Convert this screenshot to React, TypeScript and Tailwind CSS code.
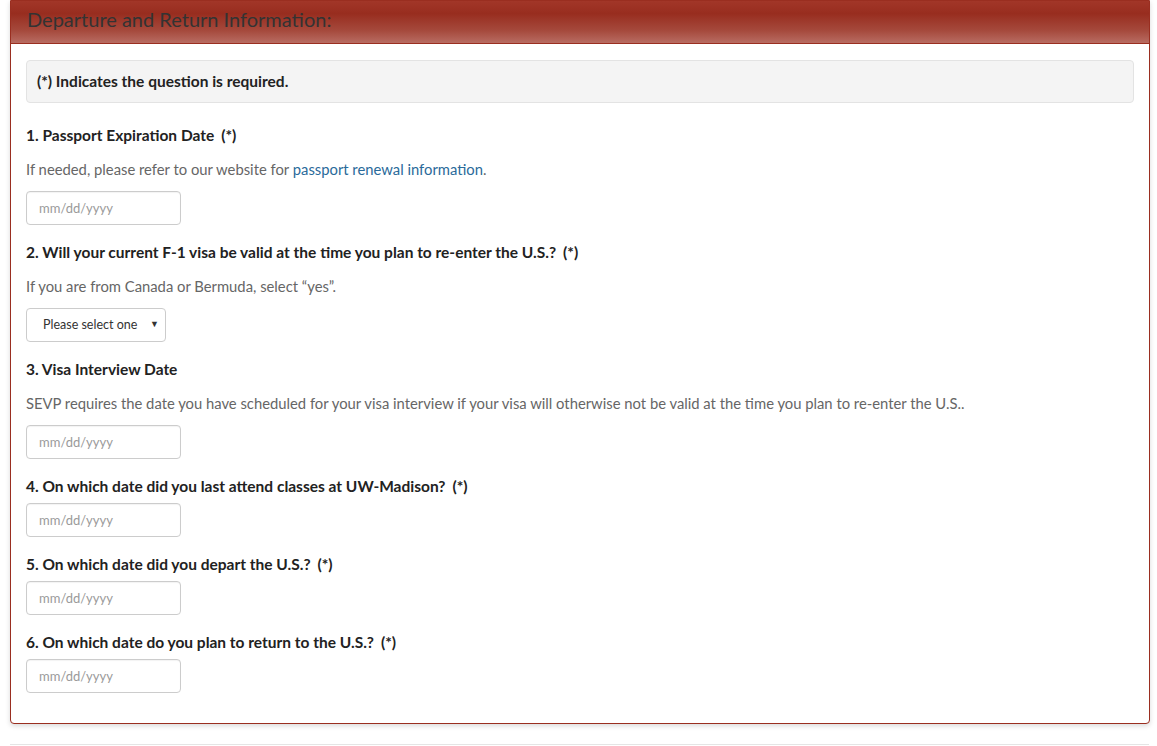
import React from 'react';

const font = { fontFamily: 'Lato, "Open Sans", sans-serif' };

const DateInput = () => (
  <input
    type="text"
    placeholder="mm/dd/yyyy"
    className="block w-[155px] h-[34px] px-[12px] border border-[#cccccc] rounded-[4px] bg-white text-[13px] text-[#555] placeholder:text-[#9a9a9a] shadow-[inset_0_1px_1px_rgba(0,0,0,0.05)] outline-none"
  />
);

const Label = ({ children, required }: { children: React.ReactNode; required?: boolean }) => (
  <label className="block text-[15.5px] leading-[21px] font-bold text-[#222] mb-[6px]">
    {children}
    {required && <span className="ml-[7px]">(*)</span>}
  </label>
);

const Help = ({ children }: { children: React.ReactNode }) => (
  <p className="text-[14.8px] leading-[21px] text-[#666] mt-[13px] mb-[11px]">{children}</p>
);

const App = () => {
  return (
    <div className="bg-white min-h-[746px] pl-[10px] pr-[7px]" style={font}>
      <div className="border border-[#9a2e20] rounded-b-[4px] shadow-[0_2px_5px_rgba(0,0,0,0.15)] bg-white">
        <div className="h-[43px] border-b border-[#9a2e20] bg-[linear-gradient(to_bottom,#a23628_0%,#982d1f_30%,#a5493c_70%,#b86c62_100%)] pl-[16px] flex items-center pb-[7px]">
          <h2 className="text-[20px] font-normal text-[#333] leading-none">
            Departure and Return Information:
          </h2>
        </div>

        <div className="px-[15px] pt-[16px] pb-[30px]">
          <div className="h-[43px] bg-[#f4f4f4] border border-[#e3e3e3] rounded-[4px] flex items-center px-[10px] mb-[22px]">
            <span className="text-[15.5px] font-bold text-[#222]">(*) Indicates the question is required.</span>
          </div>

          <div className="mb-[17px]">
            <Label required>1. Passport Expiration Date</Label>
            <Help>
              If needed, please refer to our website for{' '}
              <a className="text-[#2a6a9a]">passport renewal information</a>.
            </Help>
            <DateInput />
          </div>

          <div className="mb-[17px]">
            <Label required>2. Will your current F-1 visa be valid at the time you plan to re-enter the U.S.?</Label>
            <Help>If you are from Canada or Bermuda, select “yes”.</Help>
            <div className="relative w-[140px] h-[34px]">
              <select className="appearance-none w-full h-full border border-[#cccccc] rounded-[4px] bg-white pl-[16px] text-[12.5px] text-[#333] outline-none">
                <option>Please select one</option>
                <option>Yes</option>
                <option>No</option>
              </select>
              <span className="absolute right-[7px] top-[9px] text-[9px] text-[#333] pointer-events-none">▼</span>
            </div>
          </div>

          <div className="mb-[17px]">
            <Label>3. Visa Interview Date</Label>
            <Help>
              SEVP requires the date you have scheduled for your visa interview if your visa will otherwise not be valid at the time you plan to re-enter the U.S..
            </Help>
            <DateInput />
          </div>

          <div className="mb-[17px]">
            <Label required>4. On which date did you last attend classes at UW-Madison?</Label>
            <DateInput />
          </div>

          <div className="mb-[17px]">
            <Label required>5. On which date did you depart the U.S.?</Label>
            <DateInput />
          </div>

          <div>
            <Label required>6. On which date do you plan to return to the U.S.?</Label>
            <DateInput />
          </div>
        </div>
      </div>
      <hr className="mt-[20px] border-t border-[#e5e5e5] mr-[1px]" />
    </div>
  );
};

export default App;
